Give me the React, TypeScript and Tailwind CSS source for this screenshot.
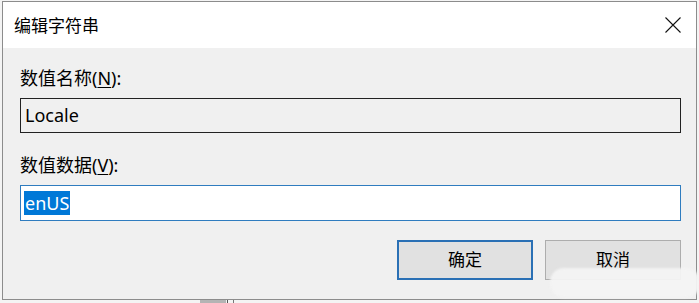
import React from 'react';

const font = { fontFamily: '"Noto Sans", "Noto Sans CJK SC", sans-serif' };

function CloseIcon() {
  return (
    <svg width="16" height="16" viewBox="0 0 16 16" aria-hidden="true">
      <path d="M0.5 0.5 L15.5 15.5 M15.5 0.5 L0.5 15.5" stroke="#111" strokeWidth="1.1" fill="none" />
    </svg>
  );
}

export default function App() {
  return (
    <div className="relative w-[699px] h-[303px] overflow-hidden bg-[#f4f4f4] pt-[1px] pl-[2px]" style={font}>
      {/* edit string dialog */}
      <div className="flex h-[299px] w-[695px] flex-col border border-[#8c8c8c] bg-[#f0f0f0]">
        <div className="flex h-[46px] items-center justify-between bg-white pl-[11px] pr-[15px]">
          <span className="text-[17px] leading-none text-black">编辑字符串</span>
          <CloseIcon />
        </div>

        <div className="flex flex-col pl-[17px] pr-[15px] pt-[18px]">
          <label className="h-[24px] text-[18px] leading-[24px] text-black">
            数值名称(<span className="underline underline-offset-2">N</span>):
          </label>
          <div className="mt-[8px] flex h-[35px] items-center border border-[#222] bg-[#f0f0f0] pl-[4px] text-[18px] text-black">
            Locale
          </div>

          <label className="mt-[20px] h-[24px] text-[18px] leading-[24px] text-black">
            数值数据(<span className="underline underline-offset-2">V</span>):
          </label>
          <div className="mt-[8px] flex h-[36px] items-center border border-[#2f7cbf] bg-white pl-[3px]">
            <span className="bg-[#0078d7] px-[1px] text-[18px] leading-[24px] text-white">enUS</span>
          </div>

          <div className="mt-[19px] flex justify-end gap-[12px]">
            <button type="button" className="h-[40px] w-[136px] border-2 border-[#2a70b5] bg-[#e1e1e1] text-[17px] text-black">
              确定
            </button>
            <button type="button" className="h-[40px] w-[136px] border border-[#adadad] bg-[#e1e1e1] text-[17px] text-black">
              取消
            </button>
          </div>
        </div>
      </div>

      {/* watermark blur over the corner */}
      <div className="absolute left-[550px] top-[268px] h-[30px] w-[150px] rounded-[14px] bg-[#f3f3f3]/95 blur-[1px]" />

      {/* bits of window behind */}
      <div className="absolute left-[200px] top-[300px] h-[3px] w-[26px] bg-[#b4b4b4]" />
      <div className="absolute left-[227px] top-[300px] h-[3px] w-[1px] bg-[#555]" />
      <div className="absolute left-[233px] top-[300px] h-[3px] w-[1px] bg-[#777]" />
    </div>
  );
}
